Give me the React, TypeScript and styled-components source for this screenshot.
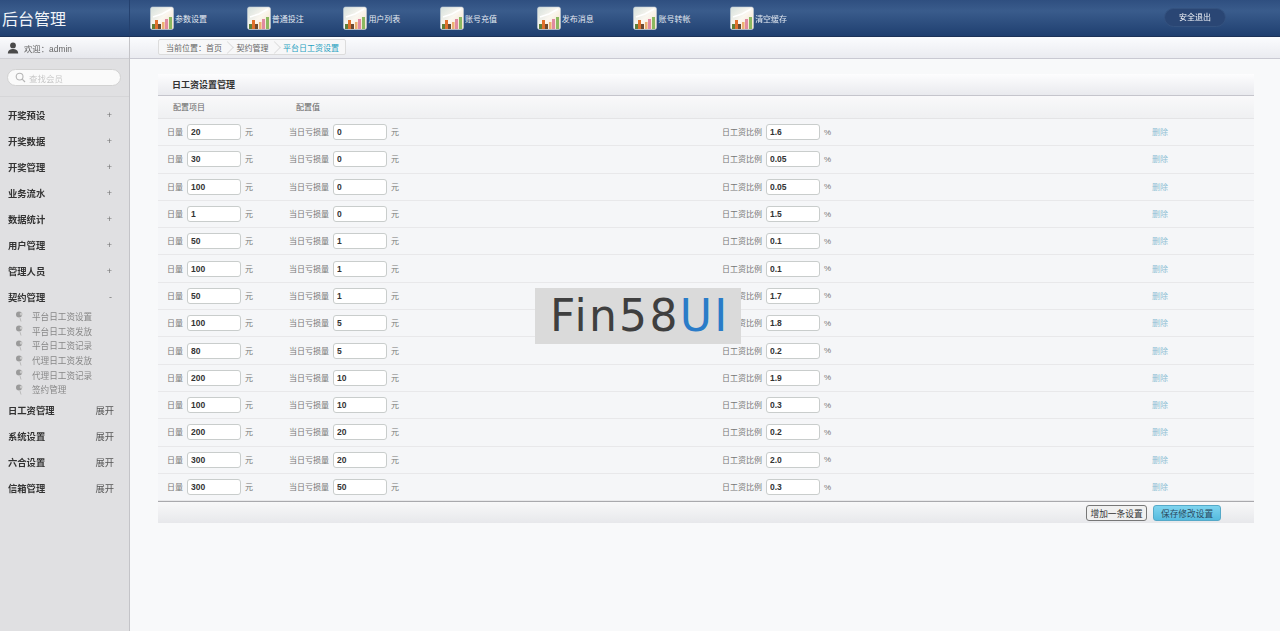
import React, { FC } from 'react';
import styled, { createGlobalStyle } from 'styled-components';

const FONT = '"Liberation Sans", "Noto Sans CJK SC", sans-serif';

const GlobalStyle = createGlobalStyle`
  html, body {
    margin: 0;
    padding: 0;
    background: #f8f9fa;
    font-family: ${FONT};
    overflow: hidden;
  }
  * {
    box-sizing: border-box;
  }
`;

const navItems = ['参数设置', '普通投注', '用户列表', '账号充值', '发布消息', '账号转帐', '清空缓存'];

const menuTop = ['开奖预设', '开奖数据', '开奖管理', '业务流水', '数据统计', '用户管理', '管理人员'];
const subMenu = ['平台日工资设置', '平台日工资发放', '平台日工资记录', '代理日工资发放', '代理日工资记录', '签约管理'];
const menuBottom = ['日工资管理', '系统设置', '六合设置', '信箱管理'];

const rows = [
  ['20', '0', '1.6'],
  ['30', '0', '0.05'],
  ['100', '0', '0.05'],
  ['1', '0', '1.5'],
  ['50', '1', '0.1'],
  ['100', '1', '0.1'],
  ['50', '1', '1.7'],
  ['100', '5', '1.8'],
  ['80', '5', '0.2'],
  ['200', '10', '1.9'],
  ['100', '10', '0.3'],
  ['200', '20', '0.2'],
  ['300', '20', '2.0'],
  ['300', '50', '0.3']
];

const ChartIcon: FC = () => (
  <svg width="24" height="24" viewBox="0 0 24 24">
    <defs>
      <linearGradient id="chart-bg" x1="0" y1="0" x2="1" y2="1">
        <stop offset="0" stopColor="#d5e0dc" />
        <stop offset="0.5" stopColor="#fbf7f0" />
        <stop offset="1" stopColor="#f5dcc4" />
      </linearGradient>
    </defs>
    <rect x="0.5" y="1" width="23" height="22.5" rx="2" fill="url(#chart-bg)" stroke="#c3ccd6" strokeWidth="0.6" />
    <path d="M3 11 L12 8 L21 3" fill="none" stroke="#ffffff" strokeWidth="1.6" />
    <rect x="2" y="18" width="3" height="5" fill="#5e7f3a" />
    <rect x="5" y="14" width="3" height="9" fill="#e0702c" />
    <rect x="8" y="18" width="3" height="5" fill="#6a4a32" />
    <rect x="12" y="16" width="2.5" height="7" fill="#edb070" />
    <rect x="15" y="13" width="3" height="10" fill="#e08aa0" />
    <rect x="19" y="11" width="3" height="12" fill="#8cb860" />
  </svg>
);

const SearchIcon: FC = () => (
  <svg width="11" height="11" viewBox="0 0 11 11">
    <circle cx="4.6" cy="4.6" r="3.4" fill="none" stroke="#b5b5b5" strokeWidth="1.1" />
    <path d="M7.2 7.2 L10 10" stroke="#b5b5b5" strokeWidth="1.2" />
  </svg>
);

const UserIcon: FC = () => (
  <svg width="12" height="12" viewBox="0 0 12 12">
    <circle cx="6" cy="3.4" r="2.9" fill="#4a4a4a" />
    <path d="M0.8 11.5 C1 8 3.5 7 6 7 C8.5 7 11 8 11.2 11.5 Z" fill="#4a4a4a" />
  </svg>
);

const BulletIcon: FC = () => (
  <svg width="9" height="11" viewBox="0 0 9 11">
    <circle cx="4" cy="3.6" r="3" fill="#9a9a9a" />
    <circle cx="6.2" cy="3" r="1.5" fill="#c8c8c8" />
    <path d="M5 7 L6 10.5" stroke="#bbbbbb" strokeWidth="1" />
  </svg>
);

const App: FC = () => (
  <Page>
    <GlobalStyle />
    <Header>
      <Logo>后台管理</Logo>
      <Nav>
        {navItems.map(item => (
          <NavItem key={item}>
            <ChartIcon />
            <NavLabel>{item}</NavLabel>
          </NavItem>
        ))}
      </Nav>
      <Logout>安全退出</Logout>
    </Header>
    <Body>
      <Sidebar>
        <Welcome>
          <UserIcon />
          <span>欢迎：admin</span>
        </Welcome>
        <SearchWrap>
          <SearchBox>
            <SearchIcon />
            <span>查找会员</span>
          </SearchBox>
        </SearchWrap>
        <Menu>
          {menuTop.map(item => (
            <MenuRow key={item}>
              <span>{item}</span>
              <MenuSign>+</MenuSign>
            </MenuRow>
          ))}
          <MenuRow>
            <span>契约管理</span>
            <MenuSign>-</MenuSign>
          </MenuRow>
          <SubMenu>
            {subMenu.map(item => (
              <SubItem key={item}>
                <BulletIcon />
                <span>{item}</span>
              </SubItem>
            ))}
          </SubMenu>
          {menuBottom.map(item => (
            <MenuRow key={item}>
              <span>{item}</span>
              <MenuToggle>展开</MenuToggle>
            </MenuRow>
          ))}
        </Menu>
      </Sidebar>
      <Main>
        <CrumbBar>
          <Crumbs>
            <Crumb $arrow>当前位置：首页</Crumb>
            <Crumb $arrow>契约管理</Crumb>
            <Crumb $active>平台日工资设置</Crumb>
          </Crumbs>
        </CrumbBar>
        <Panel>
          <PanelTitle>日工资设置管理</PanelTitle>
          <HeadRow>
            <span>配置项目</span>
            <span>配置值</span>
          </HeadRow>
          {rows.map(([amount, loss, ratio], i) => (
            <DataRow key={i}>
              <Cell>
                <Label>日量</Label>
                <ValueInput readOnly value={amount} />
                <Label>元</Label>
              </Cell>
              <Cell>
                <Label>当日亏损量</Label>
                <ValueInput readOnly value={loss} />
                <Label>元</Label>
              </Cell>
              <Cell>
                <Label>日工资比例</Label>
                <ValueInput readOnly value={ratio} />
                <Percent>%</Percent>
              </Cell>
              <DeleteLink>删除</DeleteLink>
            </DataRow>
          ))}
          <Footer>
            <PlainButton>增加一条设置</PlainButton>
            <SaveButton>保存修改设置</SaveButton>
          </Footer>
        </Panel>
        <Watermark>
          Fin58<WatermarkBlue>UI</WatermarkBlue>
        </Watermark>
      </Main>
    </Body>
  </Page>
);

export default App;

const Page = styled('div')`
  width: 1280px;
  height: 631px;
  display: flex;
  flex-direction: column;
  overflow: hidden;
  filter: blur(0.3px);
`;

const Header = styled('div')`
  height: 37px;
  flex: none;
  display: flex;
  align-items: center;
  background: linear-gradient(#2f4f80, #3a5c8c 30%, #1f3f70);
  border-bottom: 1px solid #1c3258;
`;

const Logo = styled('div')`
  width: 130px;
  height: 100%;
  flex: none;
  padding-left: 2px;
  font-size: 16px;
  line-height: 40px;
  color: #f2f5f9;
  border-right: 1px solid #24416f;
`;

const Nav = styled('div')`
  display: flex;
  padding-left: 20px;
  flex: 1;
`;

const NavItem = styled('div')`
  width: 96.7px;
  display: flex;
  align-items: center;
`;

const NavLabel = styled('span')`
  font-size: 8px;
  color: #e4eaf2;
  margin-left: 1px;
`;

const Logout = styled('div')`
  width: 62px;
  height: 19px;
  margin: -2px 54px 0 0;
  border-radius: 10px;
  background: #2a4674;
  border: 1px solid #34527f;
  font-size: 8px;
  line-height: 17px;
  text-align: center;
  color: #f4f6fa;
`;

const Body = styled('div')`
  flex: 1;
  display: flex;
  min-height: 0;
`;

const Sidebar = styled('div')`
  width: 130px;
  flex: none;
  background: #e0e0e2;
  border-right: 1px solid #c4c4c8;
`;

const Welcome = styled('div')`
  height: 22px;
  display: flex;
  align-items: center;
  gap: 5px;
  padding-left: 7px;
  font-size: 8.4px;
  color: #666;
  background: linear-gradient(#fafbfd, #e6e7ec);
  border-bottom: 1px solid #cfcfd4;
`;

const SearchWrap = styled('div')`
  height: 38px;
  padding: 10px 8px 0 7px;
  border-bottom: 1px solid #d6d6d8;
`;

const SearchBox = styled('div')`
  height: 17px;
  display: flex;
  align-items: center;
  gap: 3px;
  padding-left: 7px;
  border-radius: 9px;
  background: #fafafa;
  border: 1px solid #d2d2d2;
  font-size: 8.5px;
  color: #c8c8c8;
`;

const Menu = styled('div')`
  padding-top: 5px;
`;

const MenuRow = styled('div')`
  height: 26px;
  display: flex;
  align-items: center;
  justify-content: space-between;
  padding: 0 15px 0 8px;
  font-size: 9.3px;
  font-weight: bold;
  color: #333;
`;

const MenuSign = styled('span')`
  font-size: 9px;
  font-weight: normal;
  color: #777;
  margin-right: 2px;
`;

const MenuToggle = styled('span')`
  font-size: 9.3px;
  font-weight: normal;
  color: #555;
`;

const SubMenu = styled('div')`
  margin-top: -1px;
`;

const SubItem = styled('div')`
  height: 14.6px;
  display: flex;
  align-items: center;
  gap: 8px;
  padding-left: 15px;
  font-size: 8.6px;
  color: #888;
`;

const Main = styled('div')`
  flex: 1;
  position: relative;
  min-width: 0;
  background: #f8f9fa;
`;

const CrumbBar = styled('div')`
  height: 22px;
  display: flex;
  align-items: flex-start;
  padding: 2px 0 0 28px;
  background: linear-gradient(#fbfcfe, #eaebf0);
  border-bottom: 1px solid #c9c9d2;
`;

const Crumbs = styled('div')`
  display: flex;
  align-items: center;
  height: 16px;
  padding: 0 6px 0 7px;
  gap: 14.5px;
  background: #f7f7f8;
  border: 1px solid #dcdcdc;
  border-radius: 2px;
`;

const Crumb = styled('span')<{ $active?: boolean; $arrow?: boolean }>`
  position: relative;
  font-size: 8px;
  color: ${({ $active }) => ($active ? '#1f9fc0' : '#666')};

  ${({ $arrow }) =>
    $arrow &&
    `
    &::after {
      content: '';
      position: absolute;
      right: -10px;
      top: 1px;
      width: 8px;
      height: 8px;
      border-top: 1px solid #dedede;
      border-right: 1px solid #dedede;
      transform: rotate(45deg);
    }
  `}
`;

const Panel = styled('div')`
  margin: 15px 26px 0 28px;
`;

const PanelTitle = styled('div')`
  height: 22px;
  padding-left: 14px;
  font-size: 9px;
  font-weight: bold;
  line-height: 22px;
  color: #333;
  background: linear-gradient(#fdfdfe, #e9eaee);
  border-bottom: 1px solid #c5c5cc;
`;

const HeadRow = styled('div')`
  height: 23px;
  display: grid;
  grid-template-columns: 123px 1fr;
  align-items: center;
  padding: 0 0 1px 15px;
  font-size: 8px;
  color: #666;
  background: linear-gradient(#f9f9fa, #eff0f2);
  border-bottom: 1px solid #e4e4e6;
`;

const DataRow = styled('div')`
  height: 27.3px;
  display: grid;
  grid-template-columns: 122px 433px 430px 1fr;
  align-items: center;
  padding-left: 9px;
  background: #f5f6f8;
  border-bottom: 1px solid #e8e8ea;
`;

const Cell = styled('div')`
  display: flex;
  align-items: center;
  gap: 4px;
`;

const Label = styled('span')`
  font-size: 8px;
  color: #777;
  margin-top: -1px;
`;

const Percent = styled('span')`
  font-size: 8px;
  color: #777;
`;

const ValueInput = styled('input')`
  width: 54px;
  height: 16px;
  padding: 0 3px;
  font-family: ${FONT};
  font-size: 8.5px;
  font-weight: bold;
  color: #333;
  background: #fff;
  border: 1px solid #c9cdcc;
  border-radius: 3px;
  outline: none;
`;

const DeleteLink = styled('span')`
  font-size: 8px;
  color: #8fc0d4;
  margin-top: -1px;
`;

const Footer = styled('div')`
  height: 22px;
  display: flex;
  align-items: center;
  justify-content: flex-end;
  gap: 6px;
  padding: 1px 33px 0 0;
  background: linear-gradient(#f8f8f9, #e7e8eb);
  border-top: 1px solid #a9a9ad;
`;

const PlainButton = styled('button')`
  width: 61px;
  height: 16px;
  padding: 0;
  font-family: ${FONT};
  font-size: 8.7px;
  color: #333;
  background: #f0f0f0;
  border: 1px solid #777;
  border-radius: 3px;
`;

const SaveButton = styled('button')`
  width: 68px;
  height: 16px;
  padding: 0;
  font-family: ${FONT};
  font-size: 8.7px;
  color: #2a4a60;
  background: linear-gradient(#7fd4ef, #55bbdf);
  border: 1px solid #55a9c8;
  border-radius: 3px;
`;

const Watermark = styled('div')`
  position: absolute;
  left: 405px;
  top: 251px;
  width: 206px;
  height: 56px;
  padding-left: 15px;
  background: #dadada;
  font-family: "DejaVu Sans", sans-serif;
  font-size: 44px;
  line-height: 56px;
  letter-spacing: 2.3px;
  color: #3f3f3f;
  white-space: nowrap;
  overflow: hidden;
`;

const WatermarkBlue = styled('span')`
  color: #2a7cc8;
`;
